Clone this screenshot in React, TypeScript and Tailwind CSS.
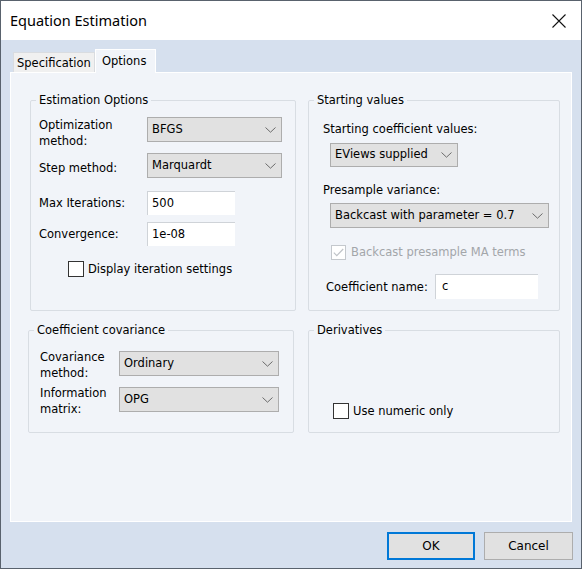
import React from "react";

const font = { fontFamily: '"DejaVu Sans", Verdana, sans-serif' };

const Chevron = () => (
  <svg width="11" height="6" viewBox="0 0 11 6" className="shrink-0">
    <path d="M0.5 0.5 L5.5 5.2 L10.5 0.5" fill="none" stroke="#6b6b6b" strokeWidth="1" />
  </svg>
);

const Combo = ({ value, className }: { value: string; className: string }) => (
  <div
    className={`flex items-center justify-between border border-[#adadad] bg-[#e1e1e1] pl-[4px] pr-[5px] text-[11.5px] text-black ${className}`}
  >
    <span>{value}</span>
    <Chevron />
  </div>
);

const TextBox = ({ value, className }: { value: string; className: string }) => (
  <div
    className={`flex items-center border-l border-t border-[#cfd3d8] bg-white pl-[4px] text-[11.5px] text-black ${className}`}
  >
    {value}
  </div>
);

const CheckBox = ({ checked, disabled, className }: { checked?: boolean; disabled?: boolean; className?: string }) => (
  <div
    className={`flex shrink-0 items-center justify-center border bg-white ${
      disabled ? "border-[#c4c8cd]" : "border-[#333333]"
    } ${className ?? ""}`}
  >
    {checked && (
      <svg width="11" height="9" viewBox="0 0 11 9">
        <path d="M0.8 4.6 L3.8 7.6 L10.2 1" fill="none" stroke="#bfc3c8" strokeWidth="1.2" />
      </svg>
    )}
  </div>
);

const Group = ({
  title,
  className,
  bodyClass,
  children,
}: {
  title: string;
  className: string;
  bodyClass: string;
  children: React.ReactNode;
}) => (
  <fieldset className={`rounded-[2px] border border-[#d8dde3] ${className}`}>
    <legend className="ml-[5px] px-[3px] text-[11.5px] leading-[14px] text-black">{title}</legend>
    <div className={bodyClass}>{children}</div>
  </fieldset>
);

export default function App() {
  return (
    <div
      className="flex h-[569px] w-[582px] flex-col overflow-hidden border border-[#59626d] bg-[#d6e0ee] text-[11.5px] text-black"
      style={font}
    >
      {/* Title bar */}
      <div className="flex h-[39px] shrink-0 items-center justify-between bg-white pl-[9px] pr-[15px]">
        <span className="text-[14.5px] text-black" style={{ fontFamily: '"Noto Sans", "Open Sans", sans-serif' }}>
          Equation Estimation
        </span>
        <svg width="14" height="14" viewBox="0 0 14 14">
          <path d="M0.5 0.5 L13.5 13.5 M13.5 0.5 L0.5 13.5" stroke="#111" strokeWidth="1.1" />
        </svg>
      </div>

      {/* Body */}
      <div className="flex flex-1 flex-col pl-[9px] pr-[9px] pt-[9px]">
        {/* Tabs */}
        <div className="flex h-[24px] items-end pl-[3px]">
          <div className="flex h-[21px] w-[82px] items-start border border-b-0 border-[#d9dce0] bg-[#f0f0f0] pl-[3px] pt-[2px] leading-[16px]">
            Specification
          </div>
          <div className="relative z-10 flex h-[24px] w-[61px] items-start border border-b-0 border-white bg-[#f1f4f9] pl-[6px] pt-[3px] leading-[16px]">
            Options
          </div>
        </div>

        {/* Tab panel */}
        <div className="-mt-px h-[450px] w-[562px] border border-white bg-[#f1f4f9]">
          {/* Top row */}
          <div className="flex gap-[12px] pl-[19px] pt-[20px]">
            <Group title="Estimation Options" className="h-[218px] w-[266px]" bodyClass="pl-[8px] pt-[10px]">
              <div className="flex items-start">
                <div className="w-[108px] leading-[16px]">
                  Optimization
                  <br />
                  method:
                </div>
                <Combo value="BFGS" className="h-[25px] w-[135px]" />
              </div>
              <div className="mt-[4px] flex items-center">
                <div className="w-[108px] pt-[5px] leading-[16px]">Step method:</div>
                <Combo value="Marquardt" className="h-[25px] w-[135px]" />
              </div>
              <div className="mt-[13px] flex items-center">
                <div className="w-[108px] leading-[16px]">Max Iterations:</div>
                <TextBox value="500" className="h-[24px] w-[88px]" />
              </div>
              <div className="mt-[7px] flex items-center">
                <div className="w-[108px] leading-[16px]">Convergence:</div>
                <TextBox value="1e-08" className="h-[24px] w-[88px]" />
              </div>
              <div className="ml-[29px] mt-[15px] flex items-center gap-[4px]">
                <CheckBox className="h-[16px] w-[16px]" />
                <span className="leading-[16px]">Display iteration settings</span>
              </div>
            </Group>

            <Group title="Starting values" className="h-[218px] w-[252px]" bodyClass="pl-[14px] pt-[14px]">
              <div className="leading-[16px]">Starting coefficient values:</div>
              <Combo value="EViews supplied" className="ml-[7px] mt-[6px] h-[24px] w-[128px]" />
              <div className="mt-[15px] leading-[16px]">Presample variance:</div>
              <Combo value="Backcast with parameter = 0.7" className="ml-[7px] mt-[5px] h-[25px] w-[219px]" />
              <div className="ml-[8px] mt-[16px] flex h-[16px] items-center gap-[5px]">
                <CheckBox checked disabled className="h-[15px] w-[15px]" />
                <span className="leading-[16px] text-[#a3a6aa]">Backcast presample MA terms</span>
              </div>
              <div className="ml-[3px] mt-[14px] flex items-center">
                <div className="w-[109px] leading-[16px]">Coefficient name:</div>
                <TextBox value="c" className="h-[25px] w-[103px] pl-[6px]" />
              </div>
            </Group>
          </div>

          {/* Bottom row */}
          <div className="mt-[12px] flex gap-[14px] pl-[17px]">
            <Group title="Coefficient covariance" className="h-[110px] w-[266px]" bodyClass="pl-[11px] pt-[12px]">
              <div className="flex items-start">
                <div className="w-[79px] leading-[16px]">
                  Covariance
                  <br />
                  method:
                </div>
                <Combo value="Ordinary" className="mt-[2px] h-[25px] w-[160px]" />
              </div>
              <div className="mt-[4px] flex items-start">
                <div className="w-[79px] leading-[16px]">
                  Information
                  <br />
                  matrix:
                </div>
                <Combo value="OPG" className="mt-[2px] h-[25px] w-[160px]" />
              </div>
            </Group>

            <Group title="Derivatives" className="h-[110px] w-[252px]" bodyClass="pl-[24px] pt-[66px]">
              <div className="flex items-center gap-[4px]">
                <CheckBox className="h-[16px] w-[16px]" />
                <span className="leading-[16px]">Use numeric only</span>
              </div>
            </Group>
          </div>
        </div>

        {/* Buttons */}
        <div className="-mr-px mt-[10px] flex justify-end gap-[9px]">
          <button
            className="h-[28px] w-[88px] border-2 border-[#0078d7] bg-[#e1e1e1] text-[12px] text-black"
            style={font}
          >
            OK
          </button>
          <button
            className="h-[28px] w-[89px] border border-[#adadad] bg-[#e1e1e1] text-[12px] text-black"
            style={font}
          >
            Cancel
          </button>
        </div>
      </div>
    </div>
  );
}
